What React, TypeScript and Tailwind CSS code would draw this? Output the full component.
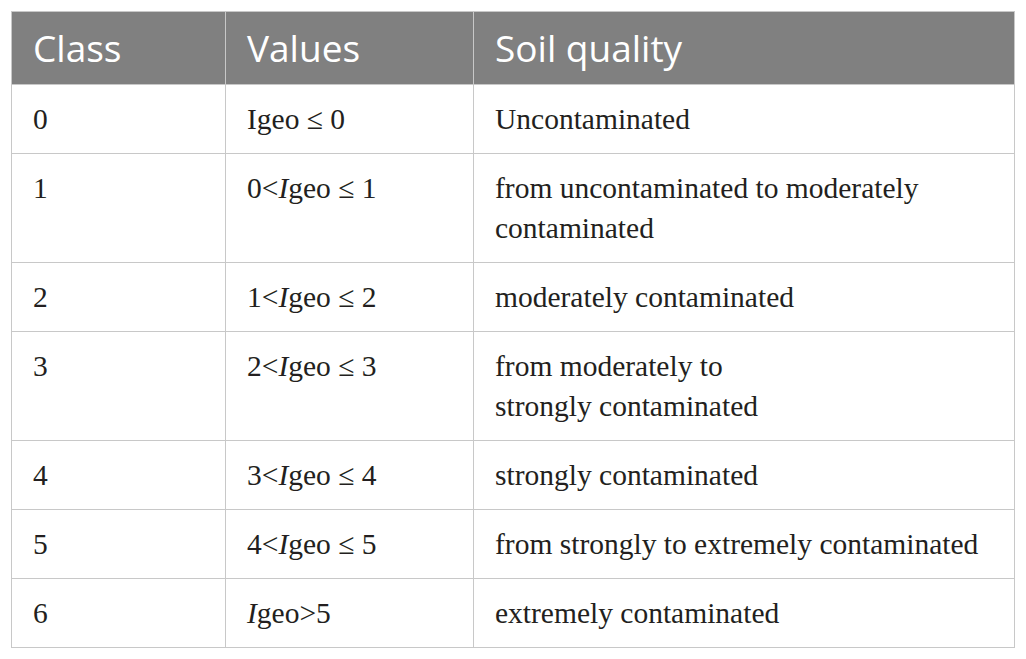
import React from "react";

type Row = { cls: string; value: React.ReactNode; quality: React.ReactNode };

const I = () => <span className="italic">I</span>;

const rows: Row[] = [
  { cls: "0", value: <>Igeo ≤ 0</>, quality: "Uncontaminated" },
  {
    cls: "1",
    value: (
      <>
        0&lt;<I />geo ≤ 1
      </>
    ),
    quality: (
      <>
        from uncontaminated to moderately
        <br />
        contaminated
      </>
    ),
  },
  {
    cls: "2",
    value: (
      <>
        1&lt;<I />geo ≤ 2
      </>
    ),
    quality: "moderately contaminated",
  },
  {
    cls: "3",
    value: (
      <>
        2&lt;<I />geo ≤ 3
      </>
    ),
    quality: (
      <>
        from moderately to
        <br />
        strongly contaminated
      </>
    ),
  },
  {
    cls: "4",
    value: (
      <>
        3&lt;<I />geo ≤ 4
      </>
    ),
    quality: "strongly contaminated",
  },
  {
    cls: "5",
    value: (
      <>
        4&lt;<I />geo ≤ 5
      </>
    ),
    quality: "from strongly to extremely contaminated",
  },
  {
    cls: "6",
    value: (
      <>
        <I />
        geo&gt;5
      </>
    ),
    quality: "extremely contaminated",
  },
];

const App: React.FC = () => {
  const th =
    "border border-[#c8c8c8] px-[21px] pt-[13px] pb-[13px] text-left font-normal text-[37px] leading-[46px] text-white whitespace-nowrap";
  const td =
    "border border-[#c8c8c8] px-[21px] pt-[14px] pb-[14px] align-top text-[29.5px] leading-[40px] text-[#231f20] whitespace-nowrap";

  return (
    <div className="min-h-screen bg-white p-[11px]">
      <table className="w-[1004px] table-fixed border-collapse">
        <colgroup>
          <col className="w-[214px]" />
          <col className="w-[248px]" />
          <col />
        </colgroup>
        <thead>
          <tr className="bg-[#808080] [font-family:'Open_Sans',sans-serif]">
            <th className={th}>Class</th>
            <th className={th}>Values</th>
            <th className={th}>Soil quality</th>
          </tr>
        </thead>
        <tbody className="[font-family:'Liberation_Serif',serif]">
          {rows.map((r) => (
            <tr key={r.cls}>
              <td className={td}>{r.cls}</td>
              <td className={td}>{r.value}</td>
              <td className={td}>{r.quality}</td>
            </tr>
          ))}
        </tbody>
      </table>
    </div>
  );
};

export default App;
